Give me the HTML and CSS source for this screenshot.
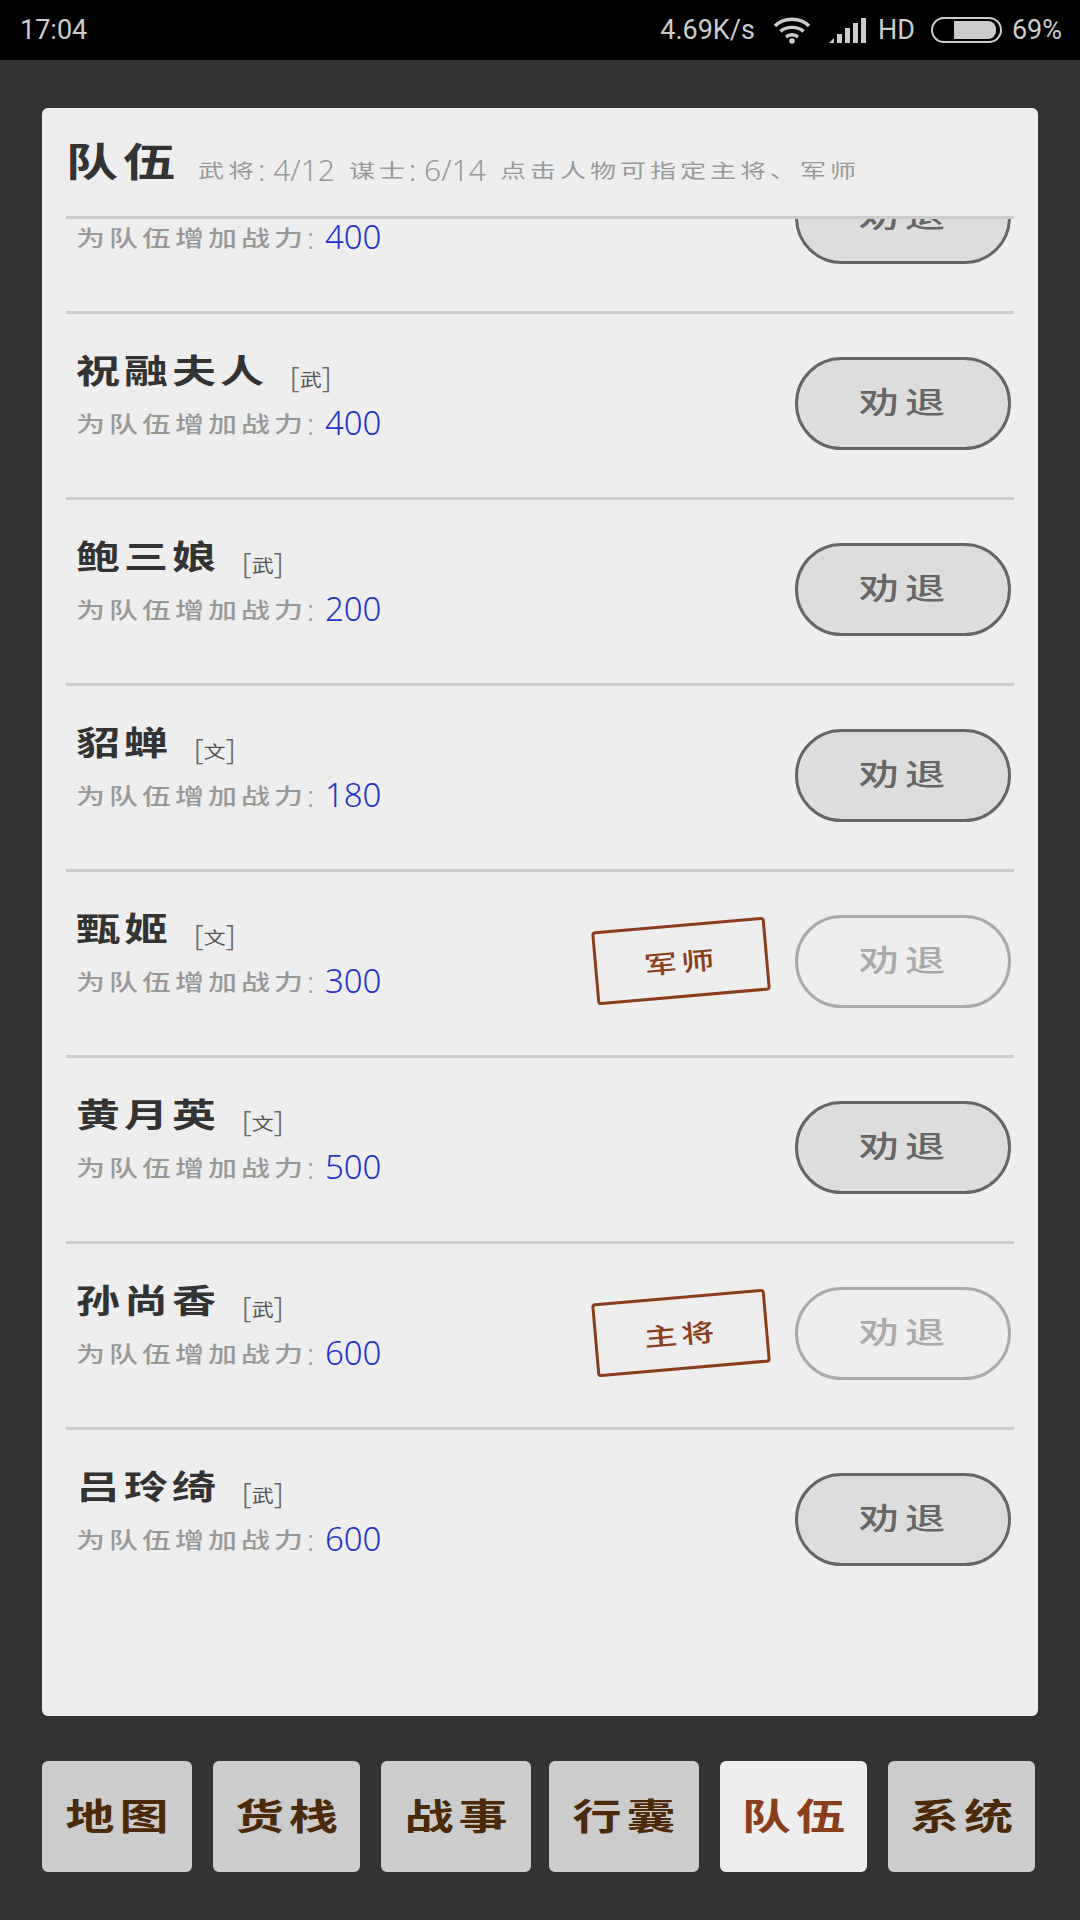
FILE: index.html
```html
<!DOCTYPE html>
<html lang="zh-CN">
  <head>
    <meta charset="UTF-8" />
    <title>队伍</title>
    <link rel="stylesheet" href="styles.css">
  </head>
  <body>
    <header class="status">
      <span class="status_time">17:04</span>
      <div class="status_right">
        <span class="status_speed">4.69K/s</span>
        <svg class="status_wifi" width="38" height="27" viewBox="0 0 38 27" fill="none" stroke="#ccc" stroke-width="3.4">
          <path d="M2 9 C11 0 27 0 36 9" />
          <path d="M7.5 14.5 C13 9 25 9 30.5 14.5" />
          <path d="M13 20 C16 17 22 17 25 20" />
          <circle cx="19" cy="24" r="2.8" fill="#ccc" stroke="none" />
        </svg>
        <svg class="status_signal" width="37" height="25" viewBox="0 0 37 25" fill="#ccc">
          <path d="M0 25 L5 20 V25 Z" />
          <rect x="8" y="16" width="5" height="9" />
          <rect x="16" y="10" width="5" height="15" />
          <rect x="24" y="5" width="5" height="20" />
          <rect x="32" y="0" width="5" height="25" />
        </svg>
        <span class="status_hd">HD</span>
        <div class="battery"><div class="battery_fill"></div></div>
        <span class="status_pct">69%</span>
      </div>
    </header>

    <main class="page">
      <section class="panel">
        <div class="panel_head">
          <h2><span class="squat">队伍</span></h2>
          <p><span class="squat">武将</span><i>: 4/12</i><span class="panel_gap squat">谋士</span><i>: 6/14</i><span class="panel_gap squat">点击人物可指定主将、军师</span></p>
        </div>
        <div class="panel_list">
          <div class="member_wrapper">
            <!-- this row is scrolled under the head, its name is out of view -->
            <div class="member">
              <div class="member_info">
                <p class="member_name"></p>
                <p class="member_power"><span class="squat">为队伍增加战力</span><i>:</i> <b>400</b></p>
              </div>
              <button class="member_btn"><span class="squat">劝退</span></button>
            </div>
            <div class="member">
              <div class="member_info">
                <p class="member_name"><span class="squat">祝融夫人</span><span class="member_tag"><i>[</i><span class="squat">武</span><i>]</i></span></p>
                <p class="member_power"><span class="squat">为队伍增加战力</span><i>:</i> <b>400</b></p>
              </div>
              <button class="member_btn"><span class="squat">劝退</span></button>
            </div>
            <div class="member">
              <div class="member_info">
                <p class="member_name"><span class="squat">鲍三娘</span><span class="member_tag"><i>[</i><span class="squat">武</span><i>]</i></span></p>
                <p class="member_power"><span class="squat">为队伍增加战力</span><i>:</i> <b>200</b></p>
              </div>
              <button class="member_btn"><span class="squat">劝退</span></button>
            </div>
            <div class="member">
              <div class="member_info">
                <p class="member_name"><span class="squat">貂蝉</span><span class="member_tag"><i>[</i><span class="squat">文</span><i>]</i></span></p>
                <p class="member_power"><span class="squat">为队伍增加战力</span><i>:</i> <b>180</b></p>
              </div>
              <button class="member_btn"><span class="squat">劝退</span></button>
            </div>
            <div class="member">
              <div class="member_info">
                <p class="member_name"><span class="squat">甄姬</span><span class="member_tag"><i>[</i><span class="squat">文</span><i>]</i></span></p>
                <p class="member_power"><span class="squat">为队伍增加战力</span><i>:</i> <b>300</b></p>
              </div>
              <div class="member_stamp"><span class="squat">军师</span></div>
              <button class="member_btn member_btn_off"><span class="squat">劝退</span></button>
            </div>
            <div class="member">
              <div class="member_info">
                <p class="member_name"><span class="squat">黄月英</span><span class="member_tag"><i>[</i><span class="squat">文</span><i>]</i></span></p>
                <p class="member_power"><span class="squat">为队伍增加战力</span><i>:</i> <b>500</b></p>
              </div>
              <button class="member_btn"><span class="squat">劝退</span></button>
            </div>
            <div class="member">
              <div class="member_info">
                <p class="member_name"><span class="squat">孙尚香</span><span class="member_tag"><i>[</i><span class="squat">武</span><i>]</i></span></p>
                <p class="member_power"><span class="squat">为队伍增加战力</span><i>:</i> <b>600</b></p>
              </div>
              <div class="member_stamp"><span class="squat">主将</span></div>
              <button class="member_btn member_btn_off"><span class="squat">劝退</span></button>
            </div>
            <div class="member member_last">
              <div class="member_info">
                <p class="member_name"><span class="squat">吕玲绮</span><span class="member_tag"><i>[</i><span class="squat">武</span><i>]</i></span></p>
                <p class="member_power"><span class="squat">为队伍增加战力</span><i>:</i> <b>600</b></p>
              </div>
              <button class="member_btn"><span class="squat">劝退</span></button>
            </div>
          </div>
        </div>
      </section>

      <nav class="tabs">
        <a class="tab tab_wide"><span class="squat">地图</span></a>
        <a class="tab"><span class="squat">货栈</span></a>
        <a class="tab tab_wide tab_tight"><span class="squat">战事</span></a>
        <a class="tab tab_wide"><span class="squat">行囊</span></a>
        <a class="tab tab_active"><span class="squat">队伍</span></a>
        <a class="tab"><span class="squat">系统</span></a>
      </nav>
    </main>
  </body>
</html>
```

FILE: styles.css
```css
/* variables */
:root {
  --pageColor: #333;
  --panelColor: #eee;
  --lineColor: #ccc;
  --brownColor: #8a3f1c;
  --cjkFont: "Noto Sans CJK SC", sans-serif;
  --thinFont: "Noto Sans", "Noto Sans CJK SC", sans-serif;
}

/* base */
*,
::before,
::after {
  box-sizing: border-box;
  margin: 0;
  padding: 0;
}
body {
  width: 1080px;
  height: 1920px;
  background-color: var(--pageColor);
  font-family: var(--cjkFont);
  display: flex;
  flex-direction: column;
  overflow: hidden;
}
i,
b {
  font-style: normal;
  font-weight: 300;
}

/* reusable css: the reference font is wide and flat */
.squat {
  display: inline-block;
  transform: scaleY(0.75);
}

/* status bar */
.status {
  height: 60px;
  flex: none;
  background-color: #000;
  color: #ccc;
  font-family: Roboto, sans-serif;
  font-size: 27px;
  display: flex;
  justify-content: space-between;
  align-items: center;
  padding: 0 18px 0 20px;
}
.status_right {
  display: flex;
  align-items: center;
}
.status_speed {
  margin-right: 18px;
}
.status_signal {
  margin-left: 18px;
}
.status_hd {
  margin-left: 12px;
}
.battery {
  width: 71px;
  height: 26px;
  margin-left: 16px;
  border: 2px solid #ccc;
  border-radius: 13px;
  padding: 2px 4px 2px 21px;
}
.battery_fill {
  height: 100%;
  background-color: #ccc;
  border-radius: 0 8px 8px 0;
}
.status_pct {
  margin-left: 10px;
}

/* page */
.page {
  flex: 1;
  display: flex;
  flex-direction: column;
  padding: 48px 45px 48px 42px;
  min-height: 0;
}

/* panel */
.panel {
  width: 996px;
  height: 1608px;
  flex: none;
  background-color: var(--panelColor);
  border-radius: 6px;
  display: flex;
  flex-direction: column;
  overflow: hidden;
}
.panel_head {
  height: 111px;
  flex: none;
  margin: 0 24px;
  border-bottom: 3px solid var(--lineColor);
  display: flex;
  align-items: center;
}
.panel_head h2 {
  font-size: 52px;
  font-weight: 700;
  letter-spacing: 5px;
  color: #333;
  width: 132px;
  flex: none;
  line-height: 1.5;
  margin-top: -6px;
}
.panel_head p {
  font-size: 26px;
  letter-spacing: 4px;
  color: #999;
  white-space: nowrap;
  margin-top: 15px;
}
.panel_head i {
  font-family: var(--thinFont);
  font-size: 30px;
  letter-spacing: 0;
}
.panel_head .panel_gap {
  margin-left: 14px;
}

/* member list */
.panel_list {
  flex: 1;
  overflow: hidden;
  min-height: 0;
}
.member_wrapper {
  margin: -91px 24px 0;
}
.member {
  height: 186px;
  border-bottom: 3px solid var(--lineColor);
  display: flex;
  align-items: flex-start;
  padding: 43px 3px 0 10px;
}
.member_last {
  border-bottom: 0;
}
.member_info {
  flex: 1;
  margin-top: -13px;
}
.member_name {
  height: 59px;
  font-size: 44px;
  font-weight: 700;
  letter-spacing: 4px;
  color: #333;
  line-height: 50px;
  white-space: nowrap;
}
.member_tag {
  margin-left: 22px;
  font-size: 22px;
  font-weight: 400;
  letter-spacing: 0;
  color: #555;
}
.member_tag i {
  font-family: var(--thinFont);
  font-size: 30px;
  color: #666;
}
.member_power {
  font-size: 29px;
  font-weight: 500;
  letter-spacing: 4px;
  color: #999;
  line-height: 52px;
  white-space: nowrap;
  margin-top: -7px;
}
.member_power i {
  font-family: var(--thinFont);
  font-size: 30px;
  letter-spacing: 0;
}
.member_power b {
  font-family: var(--thinFont);
  font-size: 33px;
  letter-spacing: 0;
  color: #2233cc;
}
.member_btn {
  width: 216px;
  height: 93px;
  flex: none;
  padding: 0 0 7px 4px;
  background-color: #ddd;
  border: 3px solid #666;
  border-radius: 47px;
  font-family: var(--cjkFont);
  font-size: 40px;
  font-weight: 500;
  letter-spacing: 6px;
  line-height: 1;
  color: #666;
}
.member_btn_off {
  background-color: transparent;
  border-color: #aaa;
  color: #aaa;
}
.member_stamp {
  width: 174px;
  height: 74px;
  flex: none;
  margin: 9px 27px 0 0;
  border: 3px solid var(--brownColor);
  border-radius: 4px;
  transform: rotate(-5deg);
  display: flex;
  justify-content: center;
  align-items: center;
  font-size: 33px;
  font-weight: 500;
  letter-spacing: 4px;
  color: var(--brownColor);
}

/* bottom tabs */
.tabs {
  margin-top: 45px;
  height: 111px;
  flex: none;
  display: flex;
  gap: 21px;
}
.tab {
  width: 147px;
  background-color: var(--lineColor);
  border-radius: 6px;
  display: flex;
  justify-content: center;
  align-items: center;
  font-size: 49px;
  font-weight: 700;
  letter-spacing: 5px;
  padding: 0 0 7px 5px;
  color: #4a2a08;
}
.tab_wide {
  width: 150px;
}
.tab_tight {
  margin-right: -3px;
}
.tab_active {
  background-color: var(--panelColor);
  color: var(--brownColor);
}
```
